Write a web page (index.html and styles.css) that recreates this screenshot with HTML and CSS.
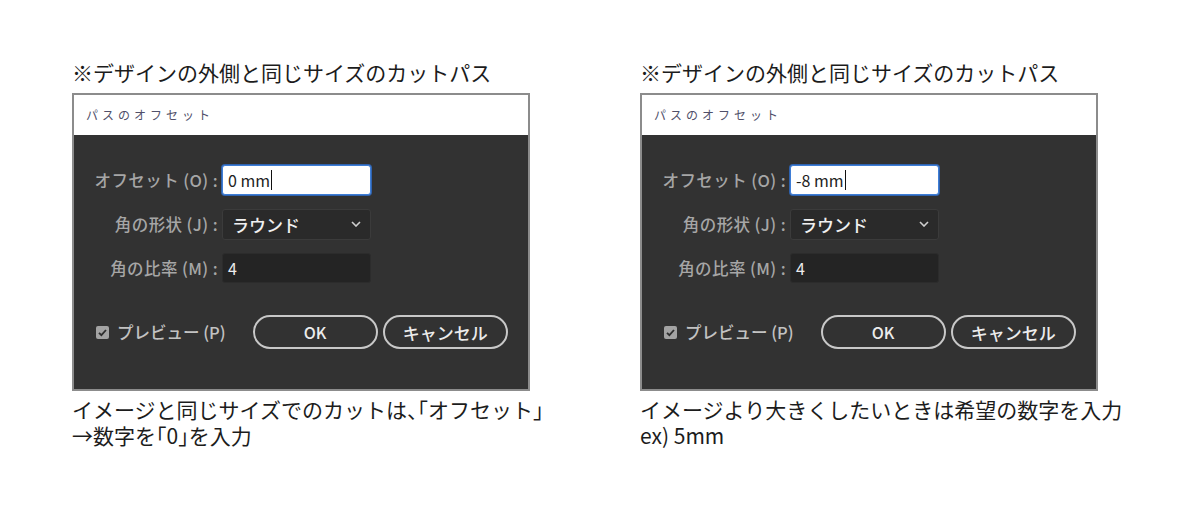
FILE: index.html
```html
<!DOCTYPE html>
<html lang="ja">
<head>
  <meta charset="UTF-8">
  <title>パスのオフセット</title>
  <link rel="stylesheet" href="styles.css">
</head>
<body>
  <main class="page">
    <section class="panel">
      <h2 class="note">※デザインの外側と同じサイズのカットパス</h2>
      <div class="dialog">
        <div class="dialog-title">パスのオフセット</div>
        <div class="dialog-body">
          <div class="fields">
            <span class="field-label">オフセット (O) :</span>
            <div class="text-input active">0 mm<span class="caret"></span></div>

            <span class="field-label">角の形状 (J) :</span>
            <div class="select">
              <span>ラウンド</span>
              <svg class="chevron" width="10" height="6" viewBox="0 0 10 6"><path d="M1 1 L5 5 L9 1" fill="none" stroke="#cfcfcf" stroke-width="1.6"/></svg>
            </div>

            <span class="field-label">角の比率 (M) :</span>
            <div class="text-input dark">4</div>
          </div>

          <div class="actions">
            <span class="preview">
              <svg class="checkbox" width="13" height="13" viewBox="0 0 13 13"><rect width="13" height="13" rx="2" fill="#a3a3a3"/><path d="M3 6.8 L5.4 9.2 L10 4" fill="none" stroke="#2e2e2e" stroke-width="1.8"/></svg>
              プレビュー (P)
            </span>
            <button class="btn ok">OK</button>
            <button class="btn">キャンセル</button>
          </div>
        </div>
      </div>
      <p class="caption">イメージと同じサイズでのカットは<span class="half">、「</span>オフセット」<br>→数字を<span class="half">「</span>0<span class="half">」</span>を入力</p>
    </section>

    <section class="panel">
      <h2 class="note">※デザインの外側と同じサイズのカットパス</h2>
      <div class="dialog">
        <div class="dialog-title">パスのオフセット</div>
        <div class="dialog-body">
          <div class="fields">
            <span class="field-label">オフセット (O) :</span>
            <div class="text-input active">-8 mm<span class="caret"></span></div>

            <span class="field-label">角の形状 (J) :</span>
            <div class="select">
              <span>ラウンド</span>
              <svg class="chevron" width="10" height="6" viewBox="0 0 10 6"><path d="M1 1 L5 5 L9 1" fill="none" stroke="#cfcfcf" stroke-width="1.6"/></svg>
            </div>

            <span class="field-label">角の比率 (M) :</span>
            <div class="text-input dark">4</div>
          </div>

          <div class="actions">
            <span class="preview">
              <svg class="checkbox" width="13" height="13" viewBox="0 0 13 13"><rect width="13" height="13" rx="2" fill="#a3a3a3"/><path d="M3 6.8 L5.4 9.2 L10 4" fill="none" stroke="#2e2e2e" stroke-width="1.8"/></svg>
              プレビュー (P)
            </span>
            <button class="btn ok">OK</button>
            <button class="btn">キャンセル</button>
          </div>
        </div>
      </div>
      <p class="caption">イメージより大きくしたいときは希望の数字を入力<br>ex) 5mm</p>
    </section>
  </main>
</body>
</html>
```

FILE: styles.css
```css
body {
  margin: 0;
  background-color: #fff;
  font-family: "Noto Sans CJK JP", "Noto Sans", sans-serif;
  color: #1c1c1c;
}
.page {
  display: flex;
  gap: 110px;
  padding: 57px 0 0 72px;
}
.panel {
  width: 458px;
  flex: none;
}
.note {
  margin: 0 0 5px;
  font-size: 21px;
  font-weight: normal;
  line-height: 31px;
  white-space: nowrap;
}
.dialog {
  height: 298px;
  box-sizing: border-box;
  border: 2px solid #8c8c8c;
  background-color: #323232;
  display: flex;
  flex-direction: column;
}
.dialog-title {
  height: 40px;
  flex: none;
  background-color: #fff;
  color: #50506a;
  font-size: 12px;
  letter-spacing: 4px;
  line-height: 40px;
  padding-left: 12px;
}
.dialog-body {
  padding: 30px 0 0 0;
}
.fields {
  display: grid;
  grid-template-columns: 144px 149px;
  grid-template-rows: 30px 31px 30px;
  column-gap: 4px;
  row-gap: 13.5px;
  align-items: center;
}
.field-label {
  text-align: right;
  color: #a6a6a6;
  font-size: 16.5px;
  font-weight: 500;
  letter-spacing: 0.4px;
  white-space: nowrap;
}
.text-input {
  height: 100%;
  box-sizing: border-box;
  border-radius: 3px;
  padding-left: 5px;
  font-size: 16px;
  display: flex;
  align-items: center;
}
.text-input.active {
  background-color: #fff;
  border: 1px solid #3f7ed6;
  box-shadow: 0 0 0 1px #2f62ad;
  color: #1e1e1e;
}
.text-input.dark {
  background-color: #242424;
  border: 1px solid #2c2c2c;
  color: #ececec;
}
.caret {
  display: inline-block;
  width: 1px;
  height: 20px;
  background-color: #111;
  margin-left: 1px;
}
.select {
  height: 100%;
  box-sizing: border-box;
  border-radius: 3px;
  background-color: #2a2a2a;
  border: 1px solid #3b3b3b;
  color: #f0f0f0;
  font-size: 17px;
  font-weight: 500;
  display: flex;
  align-items: center;
  justify-content: space-between;
  padding: 0 9px 0 9px;
}
.chevron {
  display: block;
}
.actions {
  display: flex;
  align-items: center;
  margin-top: 32px;
  padding-left: 22px;
}
.preview {
  display: flex;
  align-items: center;
  gap: 8px;
  color: #c2c2c2;
  font-size: 16.5px;
  font-weight: 500;
  margin-right: 27px;
}
.checkbox {
  display: block;
}
.btn {
  width: 125px;
  height: 34px;
  box-sizing: border-box;
  border: 2px solid #c8c8c8;
  border-radius: 17px;
  background-color: transparent;
  color: #ececec;
  font-family: inherit;
  font-size: 17px;
  font-weight: 500;
  padding: 0;
  margin-right: 5px;
}
.btn.ok {
  font-size: 16px;
}
.caption {
  margin: 5px 0 0;
  font-size: 21px;
  line-height: 26px;
  white-space: nowrap;
}
.half {
  font-feature-settings: "halt";
}
```
